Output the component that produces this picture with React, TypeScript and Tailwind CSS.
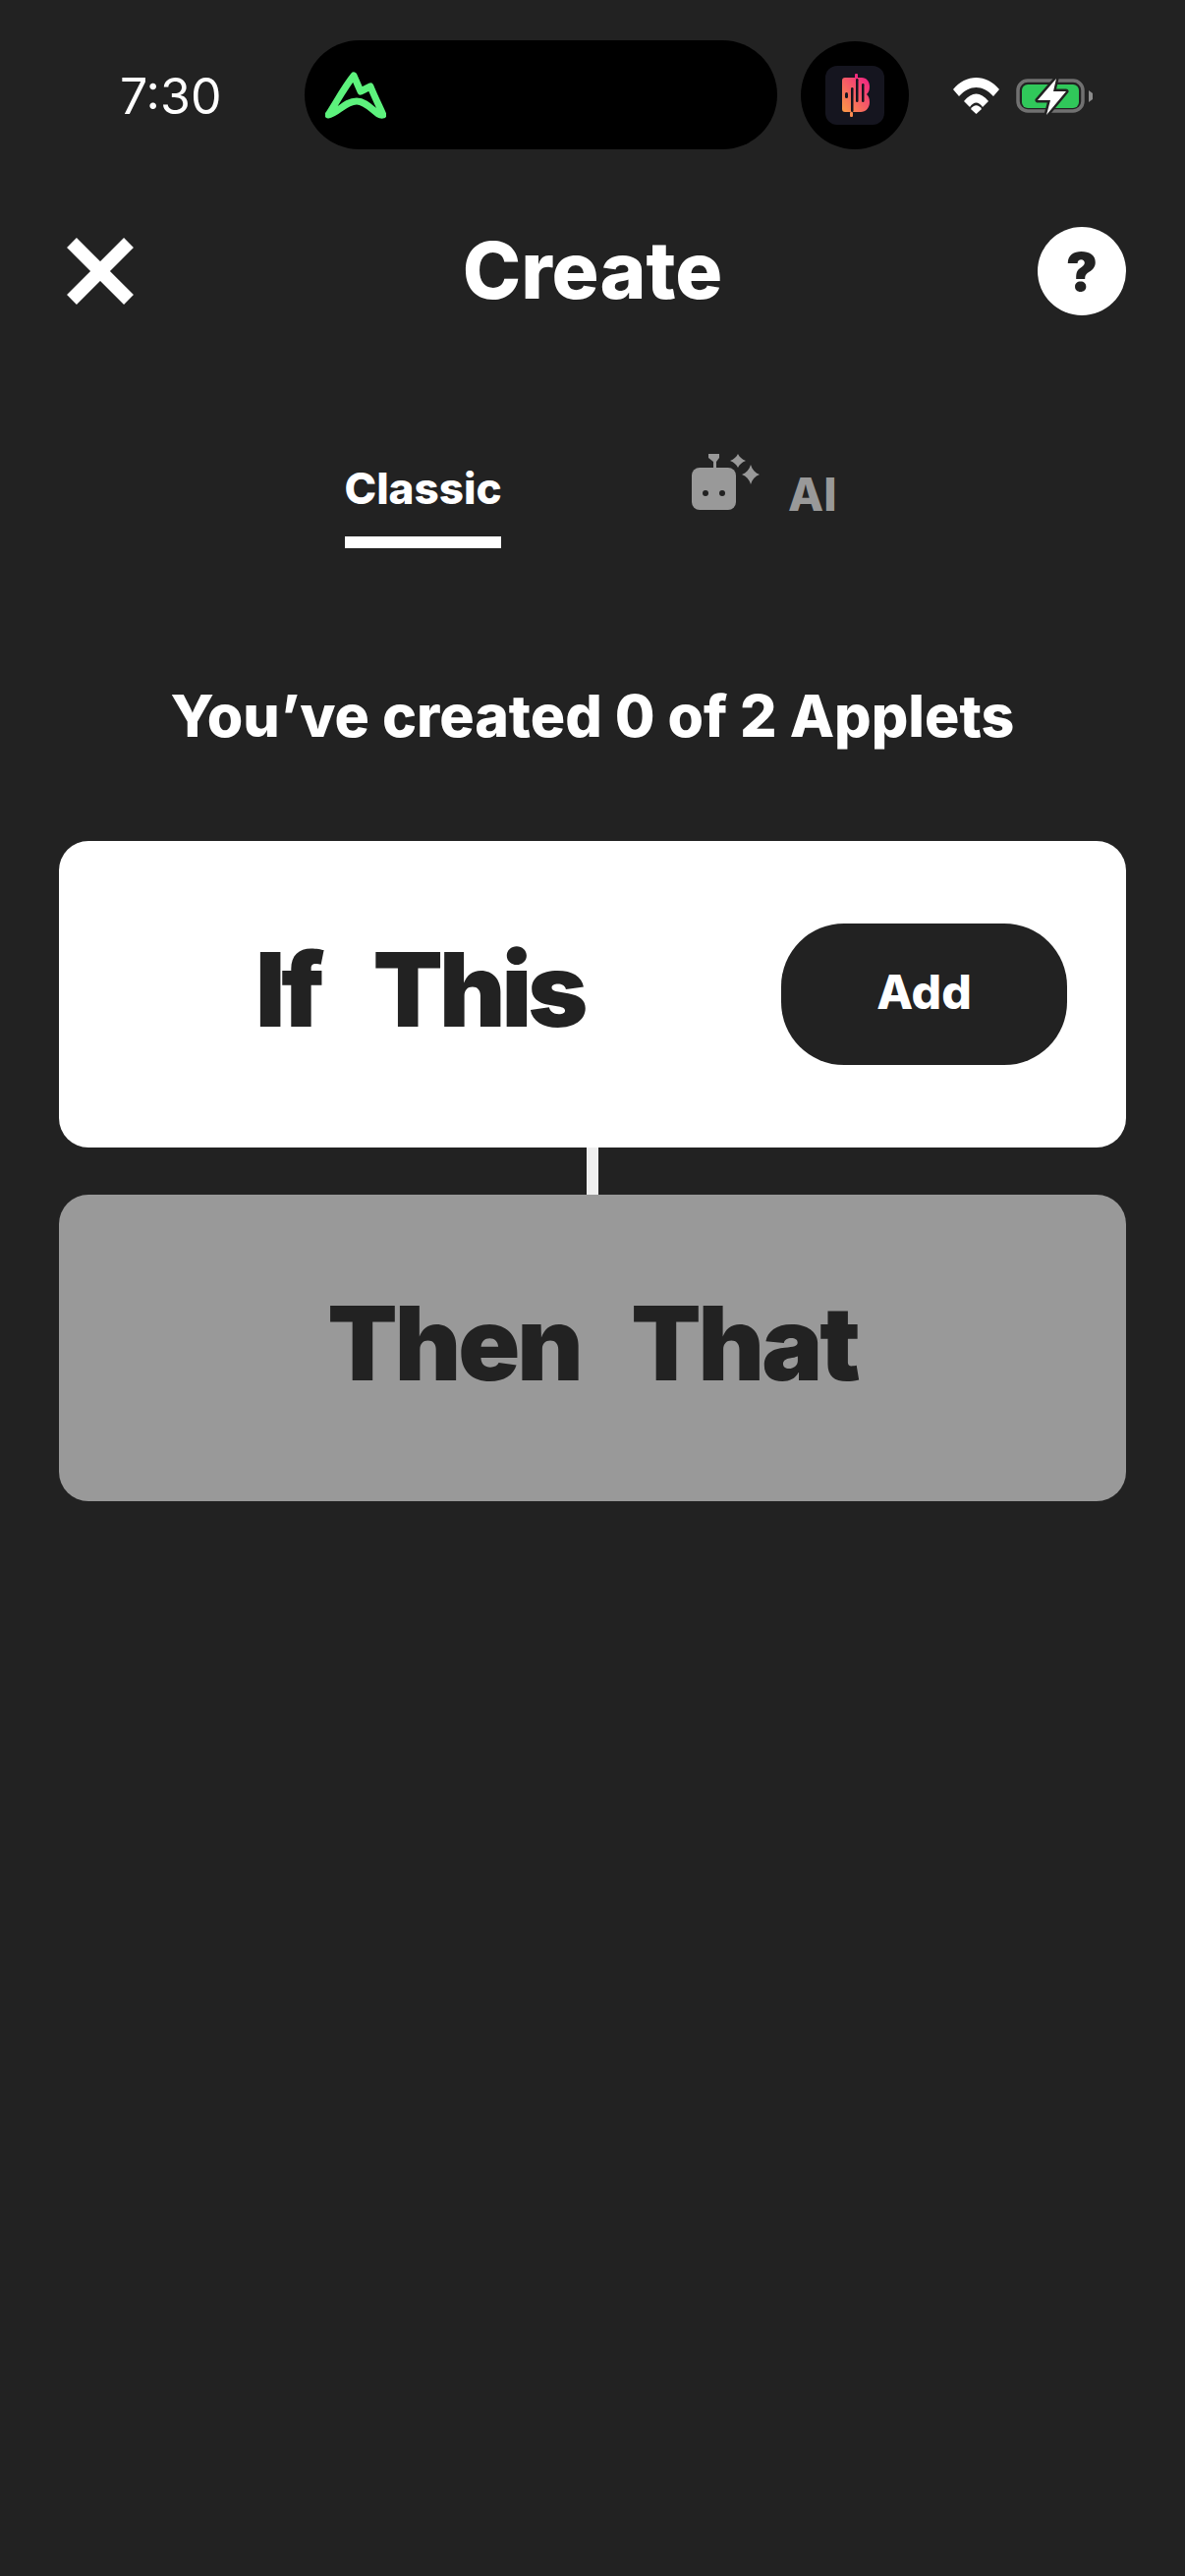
const sans = "font-['Inter',sans-serif]";

function MountainIcon() {
  return (
    <svg viewBox="0 0 62 48" className="absolute left-[21px] top-[32px] h-[48px] w-[62px]">
      <path
        d="M3 44C12 30 20 15 29 4L36 20L46 15C50 25 55 35 59 44C52 46 44 30 32 30C20 30 12 43 3 44Z"
        fill="none"
        stroke="#5df27d"
        strokeWidth="7"
        strokeLinejoin="round"
      />
    </svg>
  );
}

function AppLogo() {
  return (
    <svg viewBox="0 0 60 60" className="h-[60px] w-[60px]">
      <defs>
        <linearGradient id="logoFill" x1="1" y1="0" x2="0" y2="1">
          <stop offset="0" stopColor="#f01f85" />
          <stop offset="1" stopColor="#fb9b45" />
        </linearGradient>
      </defs>
      <rect width="60" height="60" rx="12" fill="#15151f" />
      <path
        d="M20 12H37C42 12 45 16 45 21C45 25 44 27 42 29C44 31 45 33 45 37C45 43 41 47 36 47H20C18 47 17 46 17 44V15C17 13 18 12 20 12Z"
        fill="url(#logoFill)"
      />
      <rect x="30" y="8" width="3" height="5" rx="1" fill="#f02a7c" />
      <rect x="25" y="47" width="3" height="5" rx="1" fill="#f98a50" />
      <rect x="31" y="13" width="2.5" height="24" rx="1.2" fill="#15151f" />
      <rect x="37" y="18" width="2.5" height="19" rx="1.2" fill="#15151f" />
      <rect x="26" y="22" width="2.5" height="25" rx="1.2" fill="#15151f" />
      <rect x="20" y="27" width="3" height="6" rx="1.5" fill="#15151f" />
    </svg>
  );
}

function WifiIcon() {
  return (
    <svg viewBox="0 0 47 37" className="h-[37px] w-[47px]">
      <path d="M0 12C13 -4 34 -4 47 12L41 19C30 7 17 7 6 19Z" fill="#fff" />
      <path d="M11 24C19 14 28 14 36 24L30 30C26 24 21 24 17 30Z" fill="#fff" />
      <path d="M18 32C21 27 26 27 29 32L23.5 37Z" fill="#fff" />
    </svg>
  );
}

function BatteryIcon() {
  return (
    <svg viewBox="0 0 78 38" className="h-[38px] w-[78px]">
      <rect x="2" y="3" width="66" height="31" rx="10" fill="none" stroke="#717171" strokeWidth="3.5" />
      <rect x="6" y="7" width="58" height="24" rx="6" fill="#30c85a" />
      <path d="M74 13L78 16V22L74 25Z" fill="#8c8c8c" />
      <path d="M41 1L22 23H35L31 38L51 14H38Z" fill="#fff" stroke="#222" strokeWidth="5" paintOrder="stroke" strokeLinejoin="round" />
    </svg>
  );
}

function RobotIcon() {
  return (
    <svg viewBox="0 0 71 58" className="h-[58px] w-[71px]">
      <path d="M18 0H29V4L26 8V14H23V8L18 4Z" fill="#999" />
      <rect x="1" y="14" width="45" height="43" rx="8" fill="#999" />
      <circle cx="15" cy="40" r="3" fill="#222" />
      <circle cx="32" cy="40" r="3" fill="#222" />
      <path d="M48 0C49.5 3 52 5.5 56 7C52 8.5 49.5 11 48 14C46.5 11 44 8.5 40 7C44 5.5 46.5 3 48 0Z" fill="#999" />
      <path d="M61 11C62.5 16 65.5 19.5 70 21C65.5 22.5 62.5 26 61 31C59.5 26 56.5 22.5 52 21C56.5 19.5 59.5 16 61 11Z" fill="#999" />
    </svg>
  );
}

export default function App() {
  return (
    <div className={`flex min-h-screen w-full flex-col bg-[#222222] text-white ${sans}`}>
      <div className="flex h-[152px] items-end pl-[122px]">
        <span className="mb-[26px] w-[99px] text-[50px] leading-[56px] whitespace-nowrap">7:30</span>
        <div className="relative ml-[89px] h-[111px] w-[481px] rounded-full bg-black">
          <MountainIcon />
        </div>
        <div className="ml-[24px] flex h-[110px] w-[110px] items-center justify-center rounded-full bg-black">
          <AppLogo />
        </div>
        <div className="mb-[36px] ml-[45px]">
          <WifiIcon />
        </div>
        <div className="mb-[35px] ml-[17px]">
          <BatteryIcon />
        </div>
      </div>

      <div className="mt-[79px] grid grid-cols-[90px_1fr_90px] items-center px-[60px]">
        <svg viewBox="0 0 70 70" className="ml-[7px] h-[70px] w-[70px]">
          <path d="M6 6L64 64M64 6L6 64" stroke="#fff" strokeWidth="14" fill="none" />
        </svg>
        <h1 className="pb-[3px] text-center text-[80px] leading-[87px] font-extrabold">Create</h1>
        <div className="flex h-[90px] w-[90px] items-center justify-center rounded-full bg-white text-[54px] font-black text-[#222222]">
          ?
        </div>
      </div>

      <div className="mt-[141px] flex h-[96px] items-end pl-[351px]">
        <div className="flex w-[159px] flex-col items-center">
          <span className="text-[44px] leading-[60px] font-extrabold whitespace-nowrap">Classic</span>
          <div className="mt-[19px] h-[12px] w-full bg-white" />
        </div>
        <div className="mb-[38px] ml-[193px] flex items-end">
          <RobotIcon />
          <span className="ml-[28px] text-[47px] leading-[34px] font-extrabold text-[#999999]">AI</span>
        </div>
      </div>

      <p className="mt-[139px] text-center text-[59px] leading-[64px] font-extrabold whitespace-nowrap">You’ve created 0 of 2 Applets</p>

      <div className="mt-[95px] flex flex-col items-center px-[60px]">
        <div className="flex h-[312px] w-full items-center justify-between rounded-[30px] bg-white pr-[60px] pl-[200px]">
          <span className="pb-[10px] text-[104px] leading-[120px] font-black tracking-[-4px] whitespace-pre text-[#222222] [word-spacing:10px]">If  This</span>
          <button className="h-[144px] w-[291px] rounded-[64px] bg-[#222222] pb-[4px] text-[48px] font-extrabold text-white">Add</button>
        </div>
        <div className="h-[48px] w-[12px] bg-[#eeeeee]" />
        <div className="flex h-[312px] w-full items-center justify-center rounded-[30px] bg-[#999999]">
          <span className="pb-[10px] text-[104px] leading-[120px] font-black tracking-[-3px] whitespace-pre text-[#222222] [word-spacing:8px]">Then  That</span>
        </div>
      </div>
    </div>
  );
}
